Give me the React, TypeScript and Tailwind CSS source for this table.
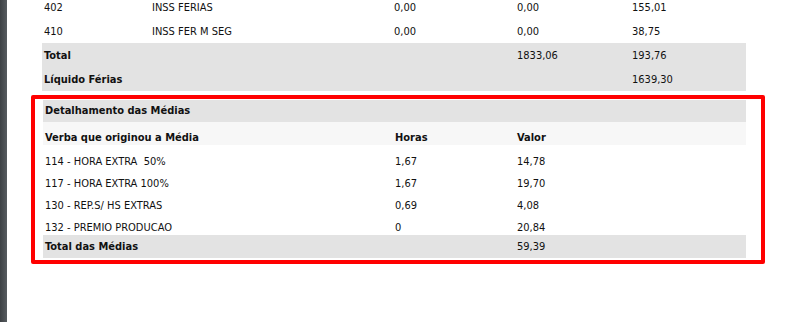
import React from "react";

const topRows = [
  { c: ["402", "INSS FERIAS", "0,00", "0,00", "155,01"], bold: false, gray: false },
  { c: ["410", "INSS FER M SEG", "0,00", "0,00", "38,75"], bold: false, gray: false },
  { c: ["Total", "", "", "1833,06", "193,76"], bold: true, gray: true },
  { c: ["Líquido Férias", "", "", "", "1639,30"], bold: true, gray: true },
];

const medias = [
  ["114 - HORA EXTRA\u00a0 50%", "1,67", "14,78"],
  ["117 - HORA EXTRA 100%", "1,67", "19,70"],
  ["130 - REP.S/ HS EXTRAS", "0,69", "4,08"],
  ["132 - PREMIO PRODUCAO", "0", "20,84"],
];

export default function App() {
  return (
    <div
      className="flex h-[322px] w-[788px] overflow-hidden bg-white text-[11px] text-[#111] font-stretch-condensed"
      style={{ fontFamily: '"DejaVu Sans", Verdana, sans-serif' }}
    >
      <div className="h-full w-[7px] shrink-0 bg-gradient-to-r from-[#3d4144] to-[#575c60]" />
      <div className="flex flex-col">
        <div className="ml-[35px] mt-[-5px] w-[704px]">
          {topRows.map((r, i) => (
            <div
              key={i}
              className={`flex h-[24px] items-center pt-[2px] ${r.gray ? "bg-[#e3e3e3]" : ""} ${r.bold ? "font-bold" : ""}`}
            >
              <div className="w-[110px] shrink-0 pl-[2px] whitespace-nowrap">{r.c[0]}</div>
              <div className="w-[242px] shrink-0 whitespace-nowrap">{r.c[1]}</div>
              <div className="w-[123px] shrink-0 font-normal">{r.c[2]}</div>
              <div className="w-[115px] shrink-0 font-normal">{r.c[3]}</div>
              <div className="font-normal">{r.c[4]}</div>
            </div>
          ))}
        </div>
        <div className="ml-[24px] mt-[4px] w-[734px] rounded-[2px] border-4 border-[#ff0000] pb-[2px] pl-[8px] pr-[15px] pt-[1px]">
          <div className="flex h-[22px] items-center bg-[#e3e3e3] pl-[2px] font-bold">
            Detalhamento das Médias
          </div>
          <div className="flex h-[23px] bg-[#f7f7f7] pl-[2px] pt-[9px] font-bold leading-[13px]">
            <div className="w-[350px] shrink-0">Verba que originou a Média</div>
            <div className="w-[122px] shrink-0">Horas</div>
            <div>Valor</div>
          </div>
          {medias.map((m, i) => (
            <div key={i} className="flex h-[22px] pl-[2px] pt-[9.5px] leading-[13px]">
              <div className="w-[350px] shrink-0 whitespace-pre">{m[0]}</div>
              <div className="w-[122px] shrink-0">{m[1]}</div>
              <div>{m[2]}</div>
            </div>
          ))}
          <div className="mt-[2px] flex h-[23px] items-center bg-[#e3e3e3] pl-[2px] pt-[1px]">
            <div className="w-[472px] shrink-0 font-bold">Total das Médias</div>
            <div>59,39</div>
          </div>
        </div>
      </div>
    </div>
  );
}
